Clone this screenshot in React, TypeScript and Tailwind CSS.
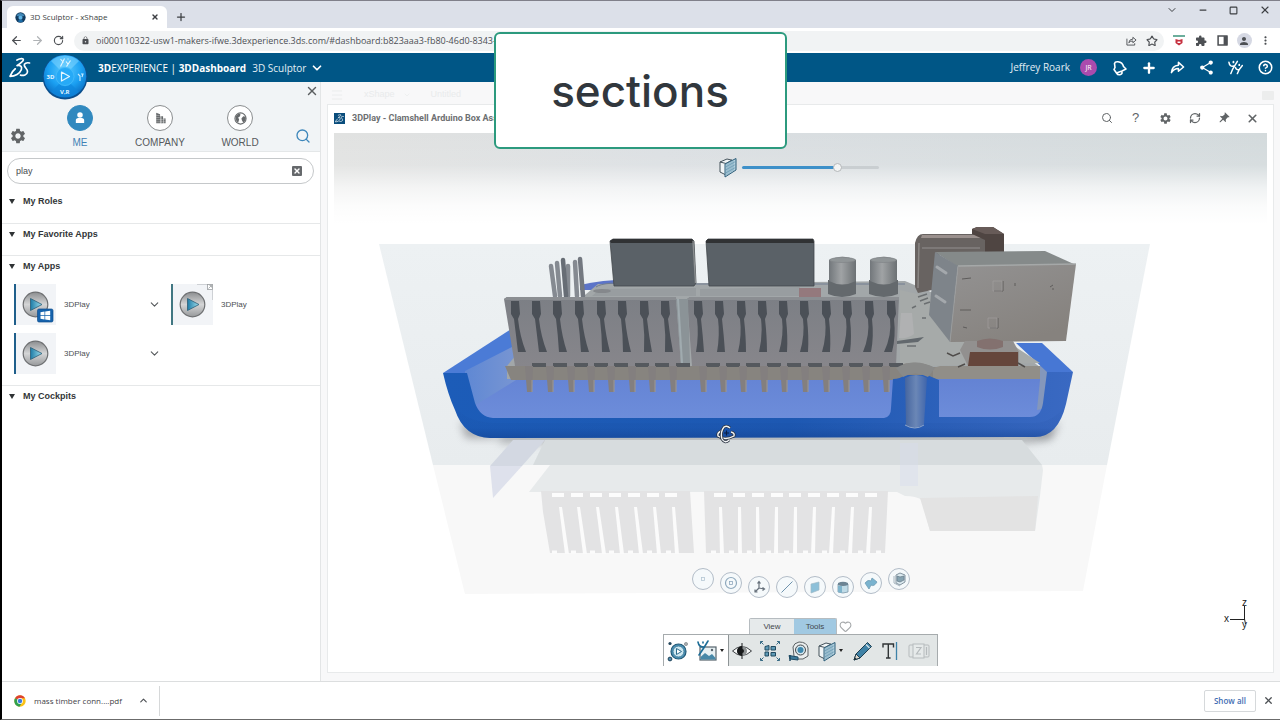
import type { ReactNode } from "react";
import {
  ArrowLeft,
  ArrowRight,
  ChevronDown,
  ChevronUp,
  CircleHelp,
  Heart,
  Menu,
  Minus,
  Plus,
  RefreshCw,
  RotateCw,
  Search,
  Square,
  Star,
  X,
} from "lucide-react";
import {
  MdExtension,
  MdLock,
  MdMoreVert,
  MdPerson,
  MdPushPin,
  MdSettings,
  MdShare,
} from "react-icons/md";

const ui = "font-['Liberation_Sans',Arial,sans-serif]";
const chrome = "font-['Open_Sans','Noto_Sans',sans-serif]";

function IconButton({ label, className = "", children }: { label: string; className?: string; children: ReactNode }) {
  return (
    <button type="button" aria-label={label} className={`flex shrink-0 items-center justify-center ${className}`}>
      {children}
    </button>
  );
}

function CompassBall({ className = "" }: { className?: string }) {
  return (
    <svg viewBox="0 0 46 46" className={className} aria-hidden="true">
      <defs>
        <radialGradient id="ball" cx="0.5" cy="0.35" r="0.65">
          <stop offset="0" stopColor="#5ccbff" />
          <stop offset="0.6" stopColor="#1ba0f2" />
          <stop offset="1" stopColor="#0a6fc4" />
        </radialGradient>
      </defs>
      <circle cx="23" cy="23" r="22.5" fill="#0b4f8e" />
      <circle cx="23" cy="22.3" r="21.3" fill="url(#ball)" />
      <path d="M9 7a21 21 0 0 1 28 0L29 15a10 10 0 0 0-12 0z" fill="#7fd6ff" opacity=".55" />
      <path d="M9 38a21 21 0 0 0 28 0L29 30a10 10 0 0 1-12 0z" fill="#0e86dd" opacity=".7" />
      <circle cx="23" cy="22.5" r="9" fill="#26aaf7" stroke="#49bdfb" strokeWidth=".7" />
      <path d="M19.500 18l8 4.500-8 4.500z" fill="none" stroke="#e3f6ff" strokeWidth="1.200" strokeLinejoin="round" />
      <path d="M18.500 5l3 3.500M22.500 4.500l-4 8M24 7.500l2 2.500M28.500 6.500l-4 6M25.500 5h1" stroke="#e3f6ff" strokeWidth="1.100" fill="none" />
      <path d="M36 20l2 2v5M39 20h2l-1 3" stroke="#c8ecff" strokeWidth="1.100" fill="none" />
      <text x="4.500" y="25" fontSize="6" fontWeight="700" fill="#e3f6ff" fontFamily="Open Sans, sans-serif">3D</text>
      <text x="18" y="39.500" fontSize="6" fontWeight="700" fill="#e3f6ff" fontFamily="Open Sans, sans-serif">V,R</text>
    </svg>
  );
}

function TabIcon() {
  return (
    <svg viewBox="0 0 12 12" className="size-[11px]" aria-hidden="true">
      <circle cx="6" cy="6" r="5.600" fill="#123a5e" />
      <path d="M1.500 4a5 5 0 0 1 9 0L8 5H4z" fill="#3f86b5" />
      <circle cx="6" cy="6.200" r="2.200" fill="#5fb4e6" />
      <path d="M3 10a5 5 0 0 0 6 0L7.500 8.500h-3z" fill="#1b6da8" />
    </svg>
  );
}

function DsMark({ className = "" }: { className?: string }) {
  return (
    <svg viewBox="0 0 22 22" className={className} fill="none" stroke="currentColor" strokeWidth="1.700" strokeLinecap="round" strokeLinejoin="round" aria-hidden="true">
      <path d="M8 3C11 1.500 14.800 1 14.300 3C13.700 5 10.500 7 8 8.600C12 8 13.300 9.800 12.300 12.800C11 16.500 6 19.200 1 19.300C2.200 16.300 4 13.500 6.300 11.800" />
      <path d="M20.500 6C17.700 5.300 14.900 6.300 15.300 8.500C15.700 10.700 18.900 12 18.500 15C18.100 18 14.500 18.800 11.500 18.200" />
    </svg>
  );
}

function PeopleMark({ className = "" }: { className?: string }) {
  return (
    <svg viewBox="0 0 16 16" className={className} fill="none" stroke="currentColor" strokeWidth="1.600" strokeLinecap="round" aria-hidden="true">
      <path d="M1 2.500C1.500 5.500 3 7 5.800 6.500M10 1.500C8 5 4.500 9 3 14.500" />
      <path d="M5.800 1.800v.8" strokeWidth="1.900" />
      <path d="M8 8C8.500 10 10 10.800 12 10M15.300 5.800C13.300 8 11 11 10 14.500" />
      <path d="M12 5v.5" strokeWidth="1.900" />
    </svg>
  );
}

function SectionIcon({ className = "" }: { className?: string }) {
  return (
    <svg viewBox="0 0 20 22" className={className} strokeLinejoin="round" aria-hidden="true">
      <path d="M2 6l7-3 5 1.200v10L8 19l-6-3z" fill="#f1f5f6" stroke="#44525b" />
      <path d="M2 6l6 1.500L14 4" fill="none" stroke="#44525b" />
      <path d="M7 8l11-5.500V14L7 21z" fill="#b7d3e0" stroke="#2f5f7a" />
      <path d="M9 7.500V19M11 6.500V18M13 5.500V16.500M15 4.500V15M7.500 11l10-5.500M7.500 14l10-5.500M7.500 17l10-5.500" stroke="#5a8ea9" strokeWidth=".6" />
    </svg>
  );
}

function PlayDisc({ windows, popout }: { windows?: boolean; popout?: boolean }) {
  return (
    <svg viewBox="0 0 40 41" className="h-[41px] w-10" aria-hidden="true">
      <defs>
        <linearGradient id="disc" x1="0" y1="0" x2="0" y2="1">
          <stop offset="0" stopColor="#8c8e90" />
          <stop offset=".5" stopColor="#d4d5d6" />
          <stop offset="1" stopColor="#97999b" />
        </linearGradient>
        <linearGradient id="tri" x1="0" y1="0" x2="1" y2="0">
          <stop offset="0" stopColor="#1d7ba6" />
          <stop offset="1" stopColor="#9fe0ee" />
        </linearGradient>
      </defs>
      <circle cx="19.500" cy="20.500" r="12.300" fill="url(#disc)" stroke="#6d6f71" strokeWidth="1.200" />
      <path d="M14.500 14.500l11.500 6-11.500 6z" fill="url(#tri)" stroke="#2a5d76" strokeWidth=".8" />
      {windows && (
        <g>
          <rect x="21.500" y="25" width="15.500" height="13" rx="1.500" fill="#1663ad" stroke="#0e4d8c" strokeWidth=".7" />
          <path d="M24.500 28.200l4-.6v3.600h-4zM29.200 27.500l5-.7v4.400h-5zM24.500 31.900h4v3.500l-4-.6zM29.200 31.900h5v4.300l-5-.7z" fill="#fff" />
        </g>
      )}
      {popout && (
        <g fill="none" stroke="#9b9ea1" strokeWidth=".8">
          <path d="M24 .5h15.500V16" stroke="#c4c8cb" />
          <rect x="34.500" y=".5" width="5" height="5" fill="#fff" />
          <path d="M35.500 4.500L38.500 1.500M36.500 1.500h2v2" />
        </g>
      )}
    </svg>
  );
}

function AppTile({ windows, popout, menu }: { windows?: boolean; popout?: boolean; menu?: boolean }) {
  return (
    <div className="flex items-center">
      <a href="#play" className="flex items-center gap-2 text-[8px] leading-3 text-[#4c5053]">
        <span className={`border-l-2 bg-[#f2f4f7] ${popout ? "border-[#417782]" : "border-[#1f5f8b]"}`}>
          <PlayDisc windows={windows} popout={popout} />
        </span>
        3DPlay
      </a>
      {menu && (
        <IconButton label="App options" className="mr-[10px] ml-auto">
          <ChevronDown size={13} className="text-[#55585b]" />
        </IconButton>
      )}
    </div>
  );
}

function PanelSection({ title, children, className = "" }: { title: string; children?: ReactNode; className?: string }) {
  return (
    <section className={`border-b border-[#e6e8e9] ${className}`}>
      <h2 className="text-[9px] leading-[21px] font-bold text-[#333638]">
        <button type="button" className="flex items-center gap-2 pl-[7px]">
          <svg viewBox="0 0 6 5" className="h-[5px] w-[6px]" aria-hidden="true">
            <path d="M0 0h6L3 5z" fill="#2f3335" />
          </svg>
          {title}
        </button>
      </h2>
      {children}
    </section>
  );
}

function NavItem({ label, active, children }: { label: string; active?: boolean; children: ReactNode }) {
  return (
    <button type="button" className={`flex w-20 flex-col items-center gap-[5px] text-[10px] leading-[14px] ${active ? "text-[#3f82b5]" : "text-[#55595c]"}`}>
      <span className={`flex size-[26px] items-center justify-center rounded-full border ${active ? "border-[#3189bf] bg-[#3189bf] text-white" : "border-[#8a8d8f] bg-white text-[#66696b]"}`}>
        {children}
      </span>
      {label}
    </button>
  );
}

function Sidebar() {
  return (
    <aside className="flex w-[319px] shrink-0 flex-col border-r border-[#e3e5e6] bg-white">
      <div className="relative flex h-[70px] items-end border-b border-[#e4e7e8] bg-[#f1f4f6] pb-px">
        <IconButton label="Settings" className="mb-[6px] ml-2 size-4 text-[#626567]">
          <MdSettings size={18} className="shrink-0" />
        </IconButton>
        <nav className="ml-[14px] flex">
          <NavItem label="ME" active>
            <svg viewBox="0 0 12 14" className="h-3 w-[10px]" fill="currentColor" aria-hidden="true">
              <circle cx="6" cy="3.500" r="3.300" />
              <path d="M1 13V9.500C1 8 2 7.200 4 7h4c2 .2 3 1 3 2.500V13z" />
            </svg>
          </NavItem>
          <NavItem label="COMPANY">
            <svg viewBox="0 0 12 14" className="h-3 w-[11px]" fill="currentColor" aria-hidden="true">
              <path d="M1 1l4.500 1.500V13H1zM6 5h3v8H6zM9.500 7.500H12V13H9.500z" />
              <path d="M1 4h4M1 6.500h4M1 9h11M1 11.500h11M7 5v8" stroke="#fff" strokeWidth=".4" />
            </svg>
          </NavItem>
          <NavItem label="WORLD">
            <svg viewBox="0 0 14 14" className="size-[13px]" aria-hidden="true">
              <circle cx="7" cy="7" r="6" fill="#fff" stroke="currentColor" strokeWidth="1.200" />
              <path d="M2 4.500C4 1.500 6 1.500 7 2l-.5 2.500L4.500 6l1 2-1 3.500C2 10 1 7 2 4.500zM8 7l2-2.500 2.500.5c.8 2.500-.5 5-2.500 6.500L8.500 9z" fill="currentColor" />
            </svg>
          </NavItem>
        </nav>
        <IconButton label="Search apps" className="mb-[6px] ml-[15px] size-4 text-[#3e87bb]">
          <Search size={16} strokeWidth={2} />
        </IconButton>
        <div className="absolute top-[3px] right-[2px]">
          <IconButton label="Close panel" className="size-3 text-[#5b5e60]">
            <X size={14} strokeWidth={2.500} className="shrink-0" />
          </IconButton>
        </div>
      </div>
      <div className="pt-[6px] pr-[6px] pb-[7px] pl-[5px]">
        <div className="flex h-[26px] items-center rounded-full border border-[#c5c8ca] px-2">
          <input aria-label="Filter apps" defaultValue="play" className="min-w-0 flex-1 text-[9px] leading-3 text-[#4a4d4f] outline-none" />
          <IconButton label="Clear filter" className="mr-[3px] size-[10px] rounded-[1px] bg-[#66696c] text-white">
            <X size={8} strokeWidth={4} />
          </IconButton>
        </div>
      </div>
      <PanelSection title="My Roles" className="pb-[11px]" />
      <PanelSection title="My Favorite Apps" className="pb-[10px]" />
      <PanelSection title="My Apps" className="pb-[11px]">
        <div className="grid grid-cols-[157px_1fr] gap-y-2 pt-[7px] pl-3">
          <AppTile windows menu />
          <AppTile popout />
          <AppTile menu />
        </div>
      </PanelSection>
      <PanelSection title="My Cockpits" className="border-transparent" />
    </aside>
  );
}

const slotsLeft = [[515, 522], [536, 543], [557, 563], [579, 585], [601, 606], [622, 627], [644, 648], [665, 669]];
const slotsRight = [[698, 700], [719, 721], [741, 742], [762, 763], [783, 783], [804, 804], [826, 826], [847, 846], [869, 867], [891, 888]];
const pins = [529, 550, 571, 591, 611, 632, 652, 673, 703, 723, 743, 764, 784, 805, 826, 846, 866, 886];
const mirrorSlits = [
  [560, 567], [578, 585], [597, 604], [616, 622], [635, 641], [654, 659], [673, 677],
  [720, 722], [739, 740], [757, 758], [776, 776], [795, 795], [814, 813], [833, 831], [852, 850], [870, 868],
];
const mirrorGaps = [552, 571, 590, 609, 628, 647, 665, 714, 733, 752, 771, 789, 808, 827, 846, 865];

function Scene() {
  return (
    <svg viewBox="334 133 933 535" preserveAspectRatio="xMidYMid slice" className="absolute inset-0 size-full" role="img" aria-label="Sectioned model of a circuit board in a clamshell box">
      <defs>
        <linearGradient id="sky" x1="0" y1="0" x2="1" y2="0">
          <stop offset="0" stopColor="#e1e2e1" />
          <stop offset=".35" stopColor="#dbdfe2" />
          <stop offset="1" stopColor="#d3dadc" />
        </linearGradient>
        <linearGradient id="fade" x1="0" y1="0" x2="0" y2="1">
          <stop offset="0" stopColor="#fff" stopOpacity="0" />
          <stop offset=".35" stopColor="#fff" stopOpacity=".1" />
          <stop offset=".6" stopColor="#fff" stopOpacity=".65" />
          <stop offset=".8" stopColor="#fff" stopOpacity=".9" />
          <stop offset="1" stopColor="#fff" />
        </linearGradient>
        <linearGradient id="plane" x1="0" y1="0" x2="0" y2="1">
          <stop offset="0" stopColor="#edf1f3" />
          <stop offset="1" stopColor="#e8ecee" />
        </linearGradient>
        <linearGradient id="shell" x1="0" y1="0" x2="1" y2="0">
          <stop offset="0" stopColor="#1c5cb8" />
          <stop offset=".55" stopColor="#1d58b2" />
          <stop offset="1" stopColor="#3a69c2" />
        </linearGradient>
        <linearGradient id="depth" x1="0" y1="0" x2="0" y2="1">
          <stop offset="0" stopColor="#123f8c" stopOpacity="0" />
          <stop offset=".7" stopColor="#123f8c" stopOpacity=".1" />
          <stop offset="1" stopColor="#123f8c" stopOpacity=".5" />
        </linearGradient>
        <linearGradient id="floor" x1="0" y1="0" x2="0" y2="1">
          <stop offset="0" stopColor="#6382d3" />
          <stop offset="1" stopColor="#6e8edb" />
        </linearGradient>
        <linearGradient id="lwall" x1="0" y1="0" x2="1" y2="0">
          <stop offset="0" stopColor="#5f88d4" />
          <stop offset="1" stopColor="#7c97d2" />
        </linearGradient>
        <linearGradient id="can" x1="0" y1="0" x2="1" y2="0">
          <stop offset="0" stopColor="#72777b" />
          <stop offset=".45" stopColor="#a0a3a5" />
          <stop offset="1" stopColor="#6c7174" />
        </linearGradient>
        <linearGradient id="usb" x1="0" y1="0" x2="0.6" y2="1">
          <stop offset="0" stopColor="#939292" />
          <stop offset="1" stopColor="#86827e" />
        </linearGradient>
        <linearGradient id="comb" x1="0" y1="0" x2="0" y2="1">
          <stop offset="0" stopColor="#7c7f85" />
          <stop offset="1" stopColor="#87868b" />
        </linearGradient>
        <linearGradient id="hole" x1="0" y1="0" x2="1" y2="0">
          <stop offset="0" stopColor="#45659f" />
          <stop offset=".5" stopColor="#6b87b6" />
          <stop offset="1" stopColor="#3f65ac" />
        </linearGradient>
        <filter id="soft" x="-10%" y="-100%" width="120%" height="300%">
          <feGaussianBlur stdDeviation="4" />
        </filter>
      </defs>

      <rect x="334" y="133" width="933" height="535" fill="#fff" />
      <rect x="334" y="133" width="933" height="90" fill="url(#sky)" />
      <rect x="334" y="133" width="933" height="91" fill="url(#fade)" />

      {/* section plane and floor */}
      <path d="M379 244H1150L1107 465H433z" fill="url(#plane)" />
      <path d="M433 465H1107L1083 591L465 594z" fill="#f8f8f8" />
      <path d="M500 424H1050V440L1030 444H500z" fill="#8e9294" opacity=".5" filter="url(#soft)" />
      <path d="M460 422L500 436H1030L1060 422L1052 438H466z" fill="#74767a" opacity=".6" filter="url(#soft)" />

      {/* mirrored model */}
      <path d="M545 440H1022L1042 465H533z" fill="#d7dcde" />
      <path d="M513 440H545L522 466H490z" fill="#d3d8e2" />
      <path d="M490 466H522L493 498z" fill="#dee1ec" />
      <path d="M550 465H1042L1043 470L1040 496L1035 531H930L922 500Q916 496 905 496L897 492H529z" fill="#e7eaeb" />
      <path d="M920 498L1038 496L1035 531H930z" fill="#e3e3e3" />
      <rect x="900" y="443" width="18" height="43" fill="#d8dcee" opacity=".4" />
      <path d="M541 491H690L694 553H550L543 512zM704 491H888L885 553H706z" fill="#e3e3e4" />
      {mirrorSlits.map(([top, bottom]) => (
        <path key={top} d={`M${top - 1} 507h3L${bottom + 2} 554h-4z`} fill="#fbfbfb" />
      ))}
      {mirrorGaps.map((x) => (
        <rect key={x} x={x} y="493" width="12" height="4" fill="#fcfcfc" />
      ))}
      <path d="M552 552h5M571 552h5M590 552h5M609 552h5M628 552h5M647 552h5M666 552h5M711 552h5M729 552h5M747 552h5M766 552h5M784 552h5M803 552h5M822 552h5M840 552h5M858 552h5M876 552h5" stroke="#fbfbfb" strokeWidth="3" />

      {/* clamshell interior */}
      <path d="M580 285Q605 279 640 280V290H580z" fill="#5c74c8" />
      <path d="M443 373L511 329L516 347L467 373z" fill="#4b7bd6" />
      <path d="M465 371L540 368H895V424H480L470 405z" fill="url(#floor)" />
      <path d="M465 371L514 346L524 375L474 406L468 400z" fill="url(#lwall)" />
      <path d="M935 376H1047V424H935z" fill="url(#floor)" />
      <path d="M1040 365L1049 371L1047 408L1037 410L1040 380z" fill="#8497bb" />
      <path d="M1016 343H1042L1073 372H1047z" fill="#4777d4" />

      {/* board */}
      <path d="M598 284L905 281L950 300L1040 367V379H507V366L520 350z" fill="#a2a7a9" />
      <path d="M596 287Q604 281 640 284H905" fill="none" stroke="#707c90" strokeWidth="1" />
      <path d="M900 290L944 300L1040 363L930 366Q910 360 900 366z" fill="#a6aaa9" />
      <path d="M505 366H897Q915 359 933 367H1040V379H933Q915 371 897 380H511z" fill="#87847f" />
      <path d="M940 366H1040V379H933V368z" fill="#918e88" />

      {/* parts at the back */}
      <path d="M610 241L613 239H692L694 241L696 283L694 286H614z" fill="#5a6167" stroke="#42474b" strokeWidth=".8" />
      <path d="M610 241L613 239H692L694 243H611z" fill="#303234" />
      <path d="M693 241L695.500 283" stroke="#8d9092" strokeWidth="1.300" />
      <path d="M706 241L708 239H813L814 241V286H709z" fill="#5a6167" stroke="#42474b" strokeWidth=".8" />
      <path d="M706 241L708 239H813L814 243H706z" fill="#303234" />
      <path d="M600 289L696 288V296H592zM700 289L800 287V296H700z" fill="#989da0" />
      <rect x="799" y="288" width="22" height="9" fill="#94797d" />
      <ellipse cx="602" cy="291" rx="9" ry="2" fill="#85888c" />
      <g stroke="#858a91" strokeWidth="4.500" strokeLinecap="round">
        <path d="M551 266L555 296M557 263L560 296" />
        <path d="M568 266L568 296M575 262L577 296" />
        <path d="M563 260L566 296" stroke="#676d75" />
        <path d="M580 259L583 296" stroke="#737880" />
      </g>
      <g>
        <path d="M828 280H856V294Q842 300 828 294z" fill="#64696d" />
        <path d="M829 260Q842 253 856 260V281Q842 288 829 281z" fill="url(#can)" />
        <ellipse cx="842.500" cy="260" rx="13" ry="2.500" fill="#909597" stroke="#7e8285" strokeWidth=".6" />
        <path d="M869 280H898V294Q884 300 869 294z" fill="#64696d" />
        <path d="M870 260Q884 253 897 260V281Q884 288 870 281z" fill="url(#can)" />
        <ellipse cx="883.500" cy="260" rx="13" ry="2.500" fill="#909597" stroke="#7e8285" strokeWidth=".6" />
      </g>
      <path d="M915 243Q917 234 923 234H985L990 240V252H940L932 290L918 293L915 287z" fill="#686361" />
      <path d="M922 235H982L984 238H921z" fill="#9a908d" />
      <path d="M922 248H980" stroke="#858180" strokeWidth="1.500" />
      <path d="M919 243L918 288" stroke="#8a8785" strokeWidth="1.500" />
      <path d="M972 229L977 227H993L1004 234V252H985V240L972 234z" fill="#4f4542" />
      <path d="M972 229L977 227H993L1004 234H985z" fill="#675b58" />

      {/* USB socket */}
      <path d="M935 252L1045 251L1076 265L958 267z" fill="#858a8a" />
      <path d="M935 252L958 266L950 342L929 315z" fill="#7e848a" />
      <path d="M958 266L1076 264L1066 341L950 342z" fill="url(#usb)" />
      <path d="M958 266L1076 264" stroke="#a5a8a8" strokeWidth="1.500" />
      <path d="M958 266L950 342" stroke="#9a9c9d" strokeWidth="1" />
      <g fill="none" stroke="#5e5c5b" strokeWidth="1">
        <path d="M1003 281v10h-9M998 318v10h-8M960 310h11M962 279l9-1M963 327l4 1M1015 283v3M1050 287l3-2M1053 288v2" />
      </g>
      <path d="M993 281h9v10h-9zM988 318h9v10h-9z" fill="none" stroke="#a5a3a2" strokeWidth=".6" />
      <path d="M937 267l9 6M936 296l9 6" stroke="#a4a8ac" strokeWidth="3" strokeLinecap="round" />

      {/* small parts on the board */}
      <path d="M901 313L912 313L914 334Q908 339 899 338z" fill="#b0b1b2" />
      <path d="M897 341L924 337L918 342L897 344z" fill="#62686d" />
      <path d="M907 346h9M918 297l9-3M920 301l8-3M924 304l6-2M912 308l4-2M922 318h4" stroke="#6b6f71" strokeWidth="1.500" />
      <path d="M965 341L1013 341L1019 352V366H968L960 350z" fill="#92908f" />
      <path d="M970 352H1018V366H968z" fill="#65463c" />
      <path d="M977 341Q990 336 1003 341V347Q990 352 977 347z" fill="#83716f" />
      <path d="M947 353l6 3 7-3M958 367l7-3M1018 363l7 4" fill="none" stroke="#504d4b" strokeWidth="1.500" />

      {/* front headers */}
      <path d="M504 299L507 297H676L681 366H515z" fill="url(#comb)" />
      <path d="M504 299L507 297H676V300H504z" fill="#8b8e92" />
      <path d="M687 299L690 297H899L896 366H692z" fill="url(#comb)" />
      <path d="M687 299L690 297H899V300H687z" fill="#8b8e92" />
      <path d="M676 299H688L690 364H681z" fill="#8b9397" />
      <path d="M678 299L682 363" stroke="#a0abaf" strokeWidth="2" />
      {[...slotsLeft, ...slotsRight].map(([top, bottom]) => (
        <path
          key={top}
          d={`M${top - 4} 301h8l1 13-2 5q2 18 ${bottom - top + 1} 33h-8Q${top + 1} 335 ${top - 1} 319l-3-5z`}
          fill="#4b5057"
        />
      ))}
      {pins.map((x) => (
        <g key={x}>
          <rect x={x + 3} y="363" width="14" height="4" fill="#55595e" />
          <path d={`M${x - 4} 366h8l-1 26h-5z`} fill="#837f7f" />
          <path d={`M${x + 3} 380v12`} stroke="#9d9994" strokeWidth="1" />
        </g>
      ))}

      {/* clamshell cut face */}
      <path
        d="M443 373H467L475 403Q480 417 493 418H884Q891 417 891 408L893 379Q900 379 905 375H927L939 380V417H1030Q1041 417 1043 403L1047 372H1073L1066 404Q1058 437 1035 437L490 438Q464 437 455 410Q448 395 443 373z"
        fill="url(#shell)"
      />
      <path d="M453 405Q464 438 490 438L1035 437Q1058 437 1066 404Q1054 422 1035 423H494Q466 422 453 405z" fill="url(#depth)" />
      <path d="M905 378Q916 372 927 378L924 424Q915 431 906 425z" fill="url(#hole)" />
      <path d="M905 425Q915 431 924 425" fill="none" stroke="#8fa5c9" strokeWidth="1" />
      <path d="M896 368Q915 357 935 368L928 377Q915 370 903 377z" fill="#898a89" />

      {/* orbit cursor */}
      <g fill="none">
        <path d="M721 431Q717 433 718 436Q725 441 734 436Q735 433 731 432" stroke="#2b3442" strokeWidth="3" />
        <path d="M721 431Q717 433 718 436Q725 441 734 436Q735 433 731 432" stroke="#f2f4f6" strokeWidth="1.400" />
        <path d="M730 428Q727 425 724 427Q720 432 722 439Q725 444 729 440" stroke="#2b3442" strokeWidth="3" />
        <path d="M730 428Q727 425 724 427Q720 432 722 439Q725 444 729 440" stroke="#f2f4f6" strokeWidth="1.400" />
        <path d="M726.500 430.500v5M724 433h5" stroke="#0b1f45" strokeWidth="1.200" />
      </g>

      {/* axis triad */}
      <path d="M1230 619.500H1245M1244.500 606V620M1244.500 619l1 5" stroke="#222" fill="none" />
      <g fontFamily="Liberation Sans, Arial, sans-serif" fontSize="10" fill="#222">
        <text x="1242" y="606">z</text>
        <text x="1224" y="622">x</text>
        <text x="1242" y="628">y</text>
      </g>
    </svg>
  );
}

function Round({ label, className = "", children }: { label: string; className?: string; children: ReactNode }) {
  return (
    <button type="button" aria-label={label} className={`flex size-[22px] items-center justify-center rounded-full border border-[#b3bdc8] bg-[#f5f9fb] ${className}`}>
      <svg viewBox="0 0 16 16" className="size-4" fill="none" stroke="#8fa9bd" aria-hidden="true">
        {children}
      </svg>
    </button>
  );
}

function SelectionArc() {
  return (
    <div className="flex items-start gap-[6px]">
      <Round label="Point">
        <rect x="6.500" y="6.500" width="3" height="3" stroke="#b4c6d3" strokeWidth=".8" />
      </Round>
      <Round label="Circle" className="mt-1">
        <circle cx="8" cy="8" r="5.500" strokeWidth="1.200" />
        <rect x="6.500" y="6.500" width="3" height="3" strokeWidth=".8" />
      </Round>
      <Round label="Axis system" className="mt-2">
        <path d="M8 9V3M8 9l5 1M8 9l-4 4M6.500 4.500L8 2.500l1.500 2M11.500 8.500l2 1.500-2 1.500M4 10.500V13h2.500" stroke="#66707b" strokeWidth="1.200" />
      </Round>
      <Round label="Line" className="mt-2">
        <path d="M2.500 13.500l11-11" stroke="#6f93ad" />
      </Round>
      <Round label="Plane" className="mt-2">
        <path d="M4 5l8-2v8l-8 3z" fill="#8cc0d9" stroke="#9fb9c6" strokeWidth=".7" />
      </Round>
      <Round label="Cylinder" className="mt-2">
        <path d="M3 5v8q5 2 10 0V5z" fill="#bfdbe7" stroke="#7c97a8" strokeWidth=".8" />
        <path d="M3 4q5-2.500 10 0v2q-5 2-10 0z" fill="#6c8494" stroke="none" />
        <path d="M3 7h4v7l-4-1z" fill="#7fb4cc" stroke="none" />
      </Round>
      <Round label="Surface" className="mt-1">
        <path d="M2 8q3-4 6-2l1-3 5 4q-3 5-6 3l-2 4z" fill="#79b3cf" stroke="#6f9cb4" strokeWidth=".8" />
      </Round>
      <Round label="Volume">
        <path d="M5 4l4-2 5 2v7l-5 3-4-2z" fill="#dceaf0" stroke="#84949f" />
        <path d="M6 5l3 1 4-1v4l-4 2-3-1z" fill="#86a3b1" stroke="#6d818f" strokeWidth=".8" />
        <path d="M3 5v7l6 3" stroke="#a6b4be" />
      </Round>
    </div>
  );
}

function Caret() {
  return (
    <svg viewBox="0 0 4 3" className="h-[3px] w-1" aria-hidden="true">
      <path d="M0 0h4L2 3z" fill="#222" />
    </svg>
  );
}

function ActionBar() {
  return (
    <div className="flex flex-col items-center">
      <div className="flex items-center">
        <div role="tablist" className="flex rounded-t-[2px] border border-b-0 border-[#b6bcc0] text-[8px] leading-[15px] text-[#43484b]">
          <button type="button" role="tab" aria-selected="false" className="w-11 bg-[#e6eaeb]">View</button>
          <button type="button" role="tab" aria-selected="true" className="w-[42px] bg-[#a1c9e2]">Tools</button>
        </div>
        <IconButton label="Add to favorites" className="ml-[2px]">
          <Heart size={13} strokeWidth={2} className="text-[#a5a8aa]" />
        </IconButton>
      </div>
      <div className="flex h-8 items-center border border-b-0 border-[#a6abad] bg-[#e2e6e6]">
        <div className="flex h-full items-center border-r border-[#8e9496] bg-white pl-[3px]">
          <IconButton label="Play experience" className="size-[22px]">
            <svg viewBox="0 0 22 22" className="size-[22px]" aria-hidden="true">
              <circle cx="11.500" cy="11.500" r="7.500" fill="#4f94b8" stroke="#225a78" strokeWidth="1.200" />
              <circle cx="11.500" cy="11.500" r="5.500" fill="#cfe8f1" stroke="#2b6c8d" strokeWidth=".8" />
              <path d="M9.500 8.500l5 3-5 3z" fill="#fff" stroke="#2b6c8d" />
              <circle cx="3" cy="3.500" r="1.600" fill="#22445a" />
              <circle cx="19" cy="4" r="1.600" fill="#a8adb0" stroke="#73797d" strokeWidth=".6" />
              <circle cx="3" cy="19" r="1.900" fill="#4b8aac" stroke="#22445a" />
            </svg>
          </IconButton>
          <IconButton label="Ambience" className="ml-[7px] gap-[2px] pr-1">
            <svg viewBox="0 0 22 22" className="size-[22px]" aria-hidden="true">
              <rect x="4" y="7" width="16" height="13" fill="#e7f0f3" stroke="#55636c" strokeWidth="1.200" />
              <path d="M4.500 17l4.500-4 4 3 3-2 3.500 4v1.500h-15z" fill="#4788a8" />
              <circle cx="16" cy="10" r="1.200" fill="#55636c" />
              <path d="M2 2q1 5 5 5M12 1Q8 8 3 15M7 2v1" fill="none" stroke="#1d6d97" strokeWidth="1.600" strokeLinecap="round" />
            </svg>
            <Caret />
          </IconButton>
        </div>
        <IconButton label="Hide or show" className="ml-[2px] size-[22px]">
          <svg viewBox="0 0 22 22" className="size-[22px]" aria-hidden="true">
            <path d="M1.500 11Q11 2 20.500 11Q11 20 1.500 11z" fill="#f7f8f8" stroke="#3b3f42" />
            <circle cx="11" cy="11" r="5" fill="#8d9192" />
            <path d="M11 6a5 5 0 0 0 0 10z" fill="#17191a" />
            <path d="M11 3v16" stroke="#17191a" />
            <circle cx="11" cy="11" r="2" fill="#17191a" />
          </svg>
        </IconButton>
        <IconButton label="Fit all" className="ml-[6px] size-[22px]">
          <svg viewBox="0 0 22 22" className="size-[22px]" aria-hidden="true">
            <path d="M6 6.500l4-1V10H6zM12 6.500h4.500V10H12zM6 12h3.500v4H6zM12 12.500h4.500V16H12z" fill="#5f9ab6" stroke="#214a60" />
            <path d="M1.500 4V1.500H4M18 1.500h2.500V4M20.500 18v2.500H18M4 20.500H1.500V18M1.500 1.500l3 3M20.500 1.500l-3 3M20.500 20.500l-3-3M1.500 20.500l3-3" fill="none" stroke="#3a6d87" />
          </svg>
        </IconButton>
        <IconButton label="Measure" className="ml-[7px] size-[22px]">
          <svg viewBox="0 0 22 22" className="size-[22px]" aria-hidden="true">
            <path d="M5 7q1-4 6-5 8 0 9 6v8l-5 3H9l-3-3z" fill="#ebeeee" stroke="#5a6063" />
            <circle cx="12.500" cy="10" r="5" fill="#d5e6ed" stroke="#44494c" />
            <circle cx="12.500" cy="10" r="3" fill="#3e88ae" />
            <path d="M1 15.500l9 1.500v3l-8-1z" fill="#3d7b9b" stroke="#1e4a63" />
            <path d="M2 15v6" stroke="#1e4a63" strokeWidth="1.500" />
          </svg>
        </IconButton>
        <IconButton label="Section" className="ml-[7px] gap-[2px]">
          <SectionIcon className="h-[22px] w-5" />
          <Caret />
        </IconButton>
        <IconButton label="Markup" className="ml-[9px] size-[22px]">
          <svg viewBox="0 0 22 22" className="size-[22px]" strokeLinejoin="round" aria-hidden="true">
            <path d="M2 20l2-6L15.500 2.500l4 4L8 18z" fill="#3f82a6" stroke="#1f3f50" />
            <path d="M2 20l2-6 4 4z" fill="#dfd9ce" stroke="#1f3f50" />
            <path d="M2 20l1-2.500 1.500 1.500z" fill="#1b2327" />
            <path d="M14 4.500l3.500 3.500" stroke="#d7e5ec" strokeWidth="1.200" />
          </svg>
        </IconButton>
        <IconButton label="Text" className="ml-[6px] size-[22px]">
          <svg viewBox="0 0 22 22" className="size-[22px]" fill="none" aria-hidden="true">
            <path d="M3 7.500V4h10.500v3.500M8.300 4v14M6 18h4.600" stroke="#303436" strokeWidth="1.400" />
            <path d="M16.500 2v18" stroke="#3d82a8" strokeWidth="1.300" />
          </svg>
        </IconButton>
        <IconButton label="2D view" className="mr-[7px] ml-[6px] size-[22px]">
          <svg viewBox="0 0 22 22" className="size-[22px]" fill="none" stroke="#b6bbbd" aria-hidden="true">
            <rect x="1" y="5" width="20" height="12" rx="1" />
            <rect x="5" y="4" width="11" height="14" fill="#e6eaea" />
            <path d="M8 7.500h5L8.500 14H13M18.500 7v8" strokeWidth="1.200" />
          </svg>
        </IconButton>
      </div>
    </div>
  );
}

function Viewer() {
  return (
    <main className="flex min-w-0 flex-1 flex-col bg-[#f8f8f9] px-[6px] pb-2">
      <div className="flex h-[22px] items-center gap-5 pt-1 pl-[3px] text-[9px] text-[#e9ebec]">
        <Menu size={14} strokeWidth={1.500} />
        <span className="flex items-center gap-2">xShape <ChevronDown size={8} /></span>
        <span>Untitled</span>
        <span className="ml-auto h-[9px] w-3 rounded-[1px] bg-[#eceded]" />
      </div>
      <section className="flex flex-1 flex-col border border-[#e8eaeb] bg-white px-[6px] pb-1">
        <header className="flex h-7 items-center pb-[2px]">
          <span className="flex size-[11px] items-center justify-center bg-[#0a4d7c] text-white">
            <DsMark className="size-[9px]" />
          </span>
          <h1 className="ml-[7px] text-[9px] leading-3 font-bold text-[#6d7072]">
            <span className="font-[Roboto,sans-serif]">3DPlay - Clamshell Arduino Box Assembly</span>
          </h1>
          <div className="ml-auto flex text-[#606466]">
            <IconButton label="Search" className="w-[29px]"><Search size={12} strokeWidth={2} /></IconButton>
            <IconButton label="Help" className="w-[29px] text-[13px] leading-4"><span>?</span></IconButton>
            <IconButton label="Preferences" className="w-[30px]"><MdSettings size={13} /></IconButton>
            <IconButton label="Refresh" className="w-[29px]"><RefreshCw size={12} strokeWidth={2.500} /></IconButton>
            <IconButton label="Pin" className="w-[29px]"><MdPushPin size={13} className="rotate-45" /></IconButton>
            <IconButton label="Close viewer" className="w-[29px]"><X size={13} strokeWidth={3} /></IconButton>
          </div>
        </header>
        <div className="relative flex flex-1 flex-col items-center">
          <Scene />
          <div className="relative flex flex-1 flex-col items-center">
            <div className="mt-[23px] flex items-center gap-1 pr-1">
              <SectionIcon className="h-[22px] w-5" />
              <input
                type="range"
                aria-label="Section position"
                min={0}
                max={100}
                defaultValue={71}
                className="h-[3px] w-[137px] appearance-none rounded-full bg-[linear-gradient(to_right,#3d90c9_70%,#c9ced1_70%)] [&::-webkit-slider-thumb]:size-[9px] [&::-webkit-slider-thumb]:appearance-none [&::-webkit-slider-thumb]:rounded-full [&::-webkit-slider-thumb]:border [&::-webkit-slider-thumb]:border-[#b4b8ba] [&::-webkit-slider-thumb]:bg-[#f3f4f4]"
              />
            </div>
            <div className="mt-auto"><SelectionArc /></div>
            <div className="mt-5 mb-[2px]"><ActionBar /></div>
          </div>
        </div>
      </section>
    </main>
  );
}

export default function App() {
  return (
    <div className={`relative flex min-h-screen flex-col border-t border-b border-l-2 border-t-[#80808a] border-b-[#6b6b6b] border-l-black bg-white ${ui}`}>
      <div className={`flex h-[27px] items-stretch bg-[#dce0e9] ${chrome}`}>
        <div className="mt-[5px] ml-[5px] flex w-40 items-center rounded-t-md bg-white px-2 text-[8px] text-[#3c3f43]">
          <TabIcon />
          <span className="ml-1 leading-3">3D Sculptor - xShape</span>
          <IconButton label="Close tab" className="ml-auto"><X size={8} strokeWidth={4} className="text-[#3c3f43]" /></IconButton>
        </div>
        <IconButton label="New tab" className="ml-2 w-3"><Plus size={12} strokeWidth={2.500} className="mt-[5px] text-[#3c3f43]" /></IconButton>
        <div className="ml-auto flex h-[18px] text-[#3c3f43]">
          <IconButton label="Tab search" className="w-[31px]"><ChevronDown size={12} /></IconButton>
          <IconButton label="Minimize" className="w-[31px]"><Minus size={10} strokeWidth={3} /></IconButton>
          <IconButton label="Maximize" className="w-[31px]"><Square size={9} strokeWidth={3} /></IconButton>
          <IconButton label="Close window" className="w-[31px]"><X size={12} strokeWidth={2.200} /></IconButton>
        </div>
      </div>

      <div className={`flex h-[25px] items-center pl-[3px] text-[#4d5054] ${chrome}`}>
        <IconButton label="Back" className="w-[22px]"><ArrowLeft size={13} strokeWidth={2.200} /></IconButton>
        <IconButton label="Forward" className="w-[21px] text-[#b0b3b6]"><ArrowRight size={13} strokeWidth={2.200} /></IconButton>
        <IconButton label="Reload" className="w-[21px]"><RotateCw size={11} strokeWidth={2.500} /></IconButton>
        <div className="ml-[5px] flex h-5 min-w-0 flex-1 items-center rounded-full bg-[#f1f3f4] pr-[6px] pl-[7px]">
          <MdLock size={9} />
          <input
            aria-label="Address"
            defaultValue="oi000110322-usw1-makers-ifwe.3dexperience.3ds.com/#dashboard:b823aaa3-fb80-46d0-8343-6"
            className="ml-[6px] min-w-0 flex-1 bg-transparent text-[9px] leading-3 outline-none"
          />
          <IconButton label="Share page" className="w-[24px]">
            <svg viewBox="0 0 12 12" className="size-[11px]" fill="none" stroke="currentColor" aria-hidden="true">
              <path d="M1 4v7h8.500V9M3 8.500q.5-4 4.500-4V2.500L11 5.500 7.500 8.500v-2Q4.500 6.500 3 8.500z" />
            </svg>
          </IconButton>
          <IconButton label="Bookmark" className="ml-[3px] w-3"><Star size={12} strokeWidth={2.300} /></IconButton>
        </div>
        <div className="flex pr-[4px] pl-1">
          <IconButton label="Safety extension" className="w-[22px]">
            <svg viewBox="0 0 12 12" className="size-[12px]" aria-hidden="true">
              <path d="M0 1h12" stroke="#479a83" strokeWidth="1.600" />
              <path d="M2.500 4L6 5l3.500-1v4L6 10.500 2.500 8z" fill="#c6303f" />
              <path d="M4.500 6.500h3v1.500H4.500z" fill="#fff" />
            </svg>
          </IconButton>
          <IconButton label="Extensions" className="w-[21px]"><MdExtension size={12} /></IconButton>
          <IconButton label="Side panel" className="w-[22px]">
            <svg viewBox="0 0 10 10" className="size-[11px]" aria-hidden="true">
              <path d="M1 1h8v8H1z" fill="none" stroke="currentColor" strokeWidth="1.400" />
              <path d="M6 1h3.500v8H6z" fill="currentColor" />
            </svg>
          </IconButton>
          <IconButton label="Profile" className="w-[22px]">
            <span className="flex size-[15px] items-center justify-center rounded-full bg-[#d5d8e3]"><MdPerson size={12} /></span>
          </IconButton>
          <IconButton label="Browser menu" className="w-[21px]"><MdMoreVert size={13} /></IconButton>
        </div>
      </div>

      <header className={`flex h-[29px] items-center bg-[#005686] pl-1 text-[10px] text-white ${chrome}`}>
        <a href="#home" aria-label="Home" className="flex w-[28px] justify-center"><DsMark className="size-[22px]" /></a>
        <div className="ml-16 flex items-center gap-[6px] leading-4">
          <span><b>3D</b>EXPERIENCE | <b>3DDashboard</b></span>
          <button type="button" className="flex items-center gap-1 text-[#e2eef5]">
            3D Sculptor
            <ChevronDown size={14} strokeWidth={3} className="text-white" />
          </button>
        </div>
        <div className="ml-auto flex items-center">
          <span className="mr-[10px] text-[#e2eef5]">Jeffrey Roark</span>
          <button type="button" className="mr-2 size-[17px] rounded-full bg-[#ab4bad] text-[7px] leading-[17px]">JR</button>
          <IconButton label="Notifications" className="w-[29px]">
            <svg viewBox="0 0 16 16" className="size-4" fill="none" stroke="currentColor" strokeWidth="1.600" strokeLinejoin="round" aria-hidden="true">
              <path d="M2.500 3.500Q3 1.500 6 1.800Q10.500 2.300 11.500 6.500L14 9L10 11L4.500 13L2 9.500L3 7.500Z" />
              <path d="M4.500 13Q6 15.500 8.500 14.500T9.500 11.500" />
            </svg>
          </IconButton>
          <IconButton label="Add" className="w-[29px]"><Plus size={16} strokeWidth={3.500} /></IconButton>
          <IconButton label="Share" className="w-[29px]">
            <svg viewBox="0 0 16 16" className="size-[15px]" fill="none" stroke="currentColor" strokeWidth="1.600" strokeLinejoin="round" aria-hidden="true">
              <path d="M1.500 13.500Q2 6 9 5.500V2.500l5.500 5-5.500 4.500V9Q4 9 1.500 13.500z" />
            </svg>
          </IconButton>
          <IconButton label="Network" className="w-[29px]"><MdShare size={17} /></IconButton>
          <IconButton label="Communities" className="w-[29px]"><PeopleMark className="size-[15px]" /></IconButton>
          <IconButton label="Help" className="w-[30px]"><CircleHelp size={15} strokeWidth={2.500} /></IconButton>
        </div>
      </header>

      <div className="flex flex-1">
        <Sidebar />
        <Viewer />
      </div>

      <footer className={`flex h-[38px] items-center border-t border-[#dcdedf] bg-white pl-3 ${chrome}`}>
        <a href="#download" className="flex items-center gap-2 text-[8px] leading-3 text-[#3f4246]">
          <svg viewBox="0 0 12 12" className="size-3" aria-hidden="true">
            <circle cx="6" cy="6" r="5.700" fill="#fbc116" />
            <path d="M6 6L1 3.200A5.700 5.700 0 0 1 11 3.300H6z" fill="#dd4032" />
            <path d="M6 6L1 3.200A5.700 5.700 0 0 0 5.500 11.700L8 7.500z" fill="#2fa04f" />
            <circle cx="6" cy="6" r="2.900" fill="#fff" />
            <circle cx="6" cy="6" r="2.200" fill="#3c79e0" />
          </svg>
          mass timber conn....pdf
        </a>
        <IconButton label="Download options" className="ml-4"><ChevronUp size={11} strokeWidth={2.500} className="text-[#4d5054]" /></IconButton>
        <span className="ml-[10px] h-[30px] w-px bg-[#d6d8d9]" />
        <button type="button" className="mr-[6px] ml-auto h-[22px] w-[52px] rounded-[2px] border border-[#d6d9db] text-[8px] leading-3 font-semibold text-[#3f6db3]">Show all</button>
        <IconButton label="Close downloads" className="mr-[6px] w-3"><X size={11} strokeWidth={2.800} className="text-[#4d5054]" /></IconButton>
      </footer>

      <div className="absolute top-[53px] left-10">
        <CompassBall className="size-[46px]" />
      </div>
      <div className="absolute inset-x-0 top-[31px] flex justify-center">
        <p className="mr-[2px] flex h-[117px] w-[293px] items-center justify-center rounded-md border-2 border-[#2c9a7e] bg-white font-[Inter,sans-serif] text-[44px] leading-none font-medium text-[#31373d]">
          sections
        </p>
      </div>
    </div>
  );
}
